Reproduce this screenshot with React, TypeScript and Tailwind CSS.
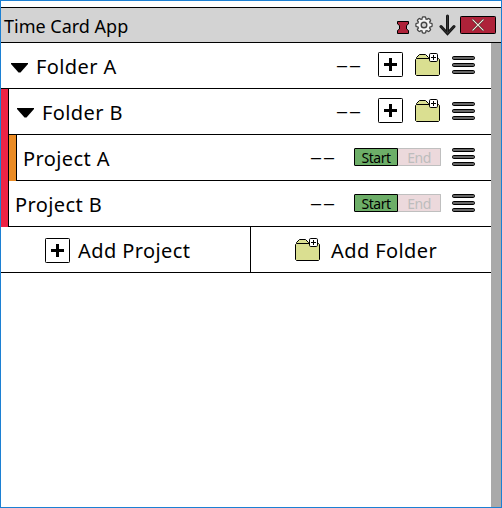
import type { ReactNode } from 'react';

function PlusBox() {
  return (
    <svg width="25" height="25" viewBox="0 0 25 25" className="block shrink-0">
      <rect x="0.5" y="0.5" width="24" height="24" rx="0.8" fill="#fff" stroke="#000" />
      <path d="M6 11h13v3H6zM11 6h3v13h-3z" fill="#000" />
    </svg>
  );
}

function FolderIcon() {
  return (
    <svg width="25" height="23" viewBox="0 0 25 23" className="block shrink-0">
      <path d="M1.5 5.5V4.5L4.5 1.5H10.5L13.5 4.5V5.5" fill="#dadf91" stroke="#000" />
      <path d="M1.5 5.5H23.5L24.5 6.5V21.5L23.5 22.5H1.5L0.5 21.5V6.5Z" fill="#dadf91" stroke="#000" />
      <rect x="14.5" y="0.5" width="8" height="8" rx="1.2" fill="#fff" stroke="#000" />
      <path d="M16 4.5h5M18.5 2v5" stroke="#000" />
    </svg>
  );
}

function MenuIcon() {
  return (
    <svg width="23" height="18" viewBox="0 0 23 18" className="block shrink-0">
      {[0.5, 7.5, 14.5].map((y) => (
        <rect key={y} x="0.5" y={y} width="22" height="3" rx="1.2" fill="#666" stroke="#000" />
      ))}
    </svg>
  );
}

function Caret() {
  return (
    <svg width="17" height="10" viewBox="0 0 17 10" className="block shrink-0">
      <path d="M0 0H17V1L9.5 9.5H7.5L0 1Z" fill="#000" />
    </svg>
  );
}

function Dashes() {
  return <span className="-mt-[5px] w-[25px] whitespace-nowrap text-[24px] font-light leading-[45px] tracking-[1px]">––</span>;
}

function Label({ children }: { children: ReactNode }) {
  return <span className="block whitespace-nowrap pt-0.5 text-[20px] leading-[45px] tracking-[0.4px]">{children}</span>;
}

function FolderRow({ name, nested = false }: { name: string; nested?: boolean }) {
  return (
    <div className={`flex h-[46px] items-center border-b border-black pr-4 ${nested ? 'pl-2' : 'pl-2.5'}`}>
      <div className={nested ? 'mt-[3px]' : 'mt-[5px]'}><Caret /></div>
      <div className="ml-2 flex-1"><Label>{name}</Label></div>
      <Dashes />
      <div className="mb-0.5 ml-[17px]"><PlusBox /></div>
      <div className="mb-0.5 ml-3"><FolderIcon /></div>
      <div className="mb-px ml-3"><MenuIcon /></div>
    </div>
  );
}

function ProjectRow({ name }: { name: string }) {
  return (
    <div className="flex h-[46px] items-center border-b border-black pl-1.5 pr-4">
      <div className="flex-1"><Label>{name}</Label></div>
      <Dashes />
      <div className="mb-px ml-[19px] flex h-[18px] text-[14px] leading-[15px] tracking-[-0.5px]">
        <button className="w-11 rounded-l-[1px] border border-black bg-[#6dae68]">Start</button>
        <button className="w-[43px] rounded-r-[1px] border border-l-0 border-[#bfbfbf] bg-[#ecd9dc] text-[#bdbdbd]">End</button>
      </div>
      <div className="mb-px ml-[11px]"><MenuIcon /></div>
    </div>
  );
}

const TEETH = [0, 45, 90, 135, 180, 225, 270, 315];

function GearIcon() {
  return (
    <svg width="18" height="18" viewBox="0 0 18 18" className="block">
      {TEETH.map((a) => (
        <rect key={a} x="6.7" y="0.3" width="4.6" height="5" rx="1.4" fill="#444" transform={`rotate(${a} 9 9)`} />
      ))}
      <circle cx="9" cy="9" r="7" fill="#444" />
      {TEETH.map((a) => (
        <rect key={a} x="7.8" y="1.5" width="2.4" height="4" rx="0.8" fill="#f4f4f4" transform={`rotate(${a} 9 9)`} />
      ))}
      <circle cx="9" cy="9" r="5.8" fill="#f4f4f4" />
      <circle cx="9" cy="9" r="2.8" fill="#d3d3d3" stroke="#444" strokeWidth="1.4" />
    </svg>
  );
}

function TitleBar() {
  return (
    <header className="mt-1.5 flex h-9 items-center border-y border-black bg-[#d3d3d3] pl-[3px] pr-[5px]">
      <h1 className="flex-1 whitespace-nowrap pt-px text-[18px] leading-[34px]">Time Card App</h1>
      <svg width="12" height="13" viewBox="0 0 12 13" className="mt-1 block">
        <path d="M.5.5h11v2.500l-2 1.500v3.500l2 1.500v3H.5v-3l2-1.500V4.500L.5 3z" fill="#ae2239" stroke="#000" />
      </svg>
      <div className="ml-1.5"><GearIcon /></div>
      <svg width="17" height="22" viewBox="0 0 17 22" className="ml-1.5 block">
        <path d="M8.500 2V19M2 12.500L8.500 19.500L15 12.500" fill="none" stroke="#151515" strokeWidth="3" strokeLinecap="round" />
        <path d="M8.500 2V19M2 12.500L8.500 19.500L15 12.500" fill="none" stroke="#333" strokeWidth="1" strokeLinecap="round" />
      </svg>
      <svg width="36" height="18" viewBox="0 0 36 18" className="ml-1 block">
        <rect x=".5" y=".5" width="35" height="17" rx=".8" fill="#ae2239" stroke="#000" />
        <path d="M12.500 3.500l11 11M23.500 3.500l-11 11" stroke="#201015" strokeWidth="2.200" />
        <path d="M12.500 3.500l11 11M23.500 3.500l-11 11" stroke="#f5e5d5" strokeWidth="1.200" />
      </svg>
    </header>
  );
}

export default function App() {
  return (
    <div className="flex h-[508px] w-[502px] flex-col overflow-hidden border border-[#1c80d3] bg-white font-['Noto_Sans','Open_Sans',sans-serif] text-black">
      <TitleBar />
      <main className="flex flex-1">
        <div className="w-[490px]">
          <FolderRow name="Folder A" />
          <div className="flex">
            <div className="w-2 border-r border-black bg-[#ed2445]" />
            <div className="flex-1">
              <FolderRow name="Folder B" nested />
              <div className="flex">
                <div className="w-2 border-r border-black bg-[#eb8c25]" />
                <div className="flex-1"><ProjectRow name="Project A" /></div>
              </div>
              <ProjectRow name="Project B" />
            </div>
          </div>
          <div className="flex h-[46px] border-b border-black">
            <button className="flex w-[250px] items-center border-r border-black pl-11">
              <div className="mt-0.5"><PlusBox /></div>
              <span className="ml-2"><Label>Add Project</Label></span>
            </button>
            <button className="flex flex-1 items-center pl-11">
              <FolderIcon />
              <span className="ml-[11px]"><Label>Add Folder</Label></span>
            </button>
          </div>
        </div>
        <div className="w-2.5 bg-[#a9a9a9]" />
      </main>
    </div>
  );
}
